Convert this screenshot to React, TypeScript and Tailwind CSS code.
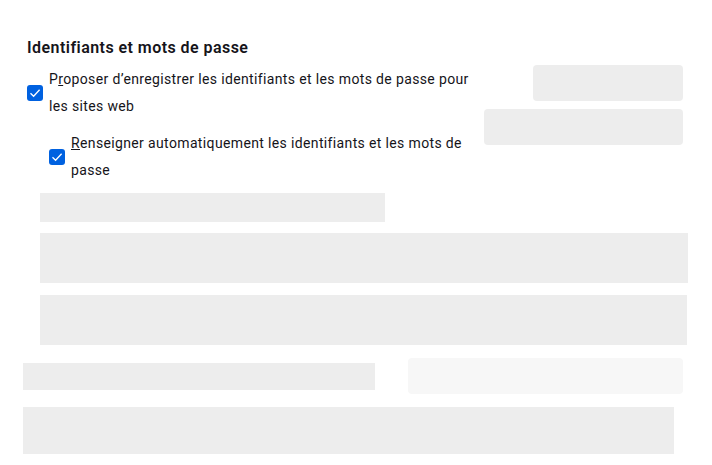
function Checkbox() {
  return (
    <span className="flex h-4 w-4 shrink-0 items-center justify-center rounded-[3px] bg-[#0061e0]">
      <svg viewBox="0 0 16 16" className="h-4 w-4" fill="none" stroke="white" strokeWidth={1.3}>
        <path d="M3.5 8.2 L6.6 11.2 L12.6 4.8" />
      </svg>
    </span>
  );
}

const font = { fontFamily: "Roboto, 'Liberation Sans', sans-serif" };

export default function App() {
  return (
    <div className="h-[465px] w-[712px] overflow-hidden bg-white text-[#15141a]" style={font}>
      <h2 className="pl-[27px] pt-[37px] text-[16px] font-semibold leading-[21px] tracking-[0.45px]">
        Identifiants et mots de passe
      </h2>

      <div className="mt-[7px] flex">
        <div className="w-[482px] pl-[27px] pt-px">
          <label className="flex items-center gap-[6px]">
            <Checkbox />
            <span className="text-[14px] leading-[27px] tracking-[0.36px]">
              P<u>r</u>oposer d’enregistrer les identifiants et les mots de passe pour les sites web
            </span>
          </label>
          <label className="ml-[22px] mt-[10px] flex items-center gap-[6px]">
            <Checkbox />
            <span className="text-[14px] leading-[27px] tracking-[0.36px]">
              <u>R</u>enseigner automatiquement les identifiants et les mots de passe
            </span>
          </label>
        </div>
        <div className="ml-auto mr-[29px] flex w-[199px] flex-col items-end gap-2">
          <div className="h-9 w-[150px] rounded bg-[#ededed]" />
          <div className="h-9 w-full rounded bg-[#ededed]" />
        </div>
      </div>

      <div className="ml-[40px] mt-[9px] h-[29px] w-[345px] bg-[#ededed]" />
      <div className="ml-[40px] mt-[11px] h-[50px] w-[648px] bg-[#ededed]" />
      <div className="ml-[40px] mt-[12px] h-[50px] w-[647px] bg-[#ededed]" />

      <div className="ml-[23px] mt-[13px] flex items-center">
        <div className="h-[27px] w-[352px] bg-[#ededed]" />
        <div className="ml-[33px] h-9 w-[275px] rounded bg-[#f7f7f7]" />
      </div>

      <div className="ml-[23px] mt-[13px] h-[47px] w-[651px] bg-[#ededed]" />
    </div>
  );
}
